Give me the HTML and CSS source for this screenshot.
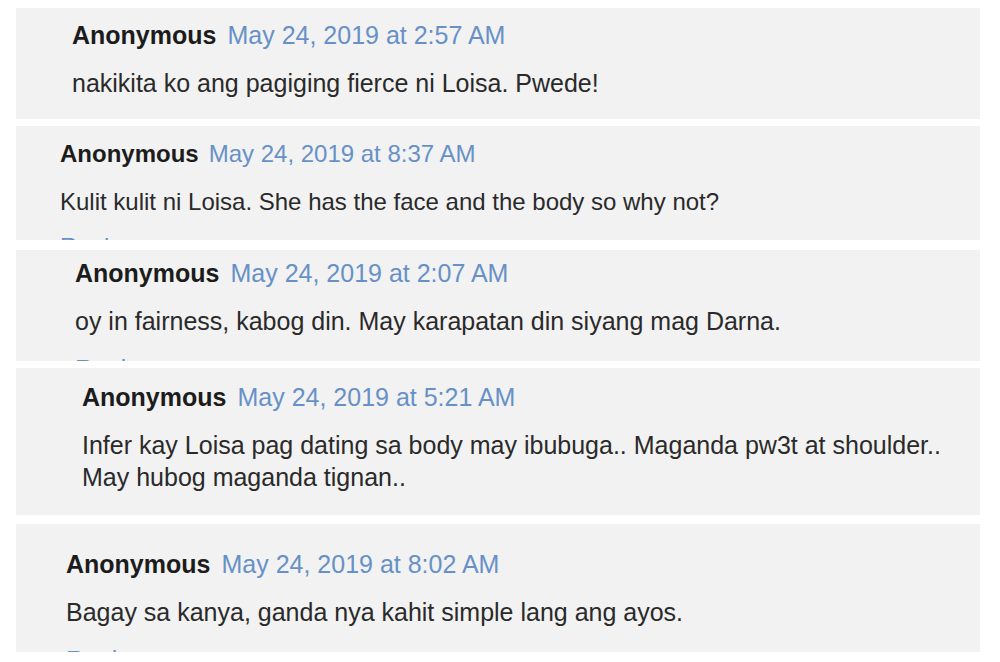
FILE: index.html
```html
<!DOCTYPE html>
<html lang="tl">
<head>
<meta charset="utf-8">
<title>Comments</title>
<link rel="stylesheet" href="styles.css">
</head>
<body>
<div class="thread">
  <div class="comment c1">
    <div class="head"><span class="name">Anonymous</span><a class="date" href="#">May 24, 2019 at 2:57 AM</a></div>
    <p class="body">nakikita ko ang pagiging fierce ni Loisa. Pwede!</p>
  </div>
  <div class="comment c2">
    <div class="head"><span class="name">Anonymous</span><a class="date" href="#">May 24, 2019 at 8:37 AM</a></div>
    <p class="body">Kulit kulit ni Loisa. She has the face and the body so why not?</p>
    <a class="reply" href="#">Reply</a>
  </div>
  <div class="comment c3">
    <div class="head"><span class="name">Anonymous</span><a class="date" href="#">May 24, 2019 at 2:07 AM</a></div>
    <p class="body">oy in fairness, kabog din. May karapatan din siyang mag Darna.</p>
    <a class="reply" href="#">Reply</a>
  </div>
  <div class="comment c4">
    <div class="head"><span class="name">Anonymous</span><a class="date" href="#">May 24, 2019 at 5:21 AM</a></div>
    <p class="body">Infer kay Loisa pag dating sa body may ibubuga.. Maganda pw3t at shoulder..<br>May hubog maganda tignan..</p>
  </div>
  <div class="comment c5">
    <div class="head"><span class="name">Anonymous</span><a class="date" href="#">May 24, 2019 at 8:02 AM</a></div>
    <p class="body">Bagay sa kanya, ganda nya kahit simple lang ang ayos.</p>
    <a class="reply" href="#">Reply</a>
  </div>
</div>
</body>
</html>
```
FILE: styles.css
```css
html, body {
  margin: 0;
  padding: 0;
  background: #ffffff;
}
body {
  font-family: "Liberation Sans", Arial, sans-serif;
  width: 1000px;
  height: 662px;
  overflow: hidden;
}
.thread {
  display: flex;
  flex-direction: column;
  padding: 8px 20px 0 16px;
}
.comment {
  background: #f2f2f2;
  overflow: hidden;
  box-sizing: border-box;
  font-size: 25px;
  display: flex;
  flex-direction: column;
  align-items: flex-start;
}
.head {
  line-height: 30px;
  white-space: nowrap;
}
.name {
  font-weight: bold;
  color: #1c1c1c;
  margin-right: 11px;
}
.date {
  color: #6791c6;
  text-decoration: none;
}
.body {
  margin: 17px 0 0 0;
  line-height: 32px;
  color: #2a2a2a;
}
.reply {
  margin-top: 15px;
  line-height: 30px;
  color: #6791c6;
  text-decoration: none;
}
.c1 { height: 111px; padding: 12px 0 0 56px; margin-bottom: 7px; }
.c2 { height: 114px; padding: 13px 0 0 44px; margin-bottom: 10px; font-size: 24px; }
.c2 .name { margin-right: 10px; }
.c2 .reply { margin-top: 14px; }
.c3 { height: 111px; padding: 8px 0 0 59px; margin-bottom: 7px; }
.c3 .reply { margin-top: 17px; }
.c4 { height: 147px; padding: 14px 0 0 66px; margin-bottom: 9px; }
.c4 .body { width: 880px; }
.c5 { height: 128px; padding: 25px 0 0 50px; }
.c5 .reply { margin-top: 17px; }
```
